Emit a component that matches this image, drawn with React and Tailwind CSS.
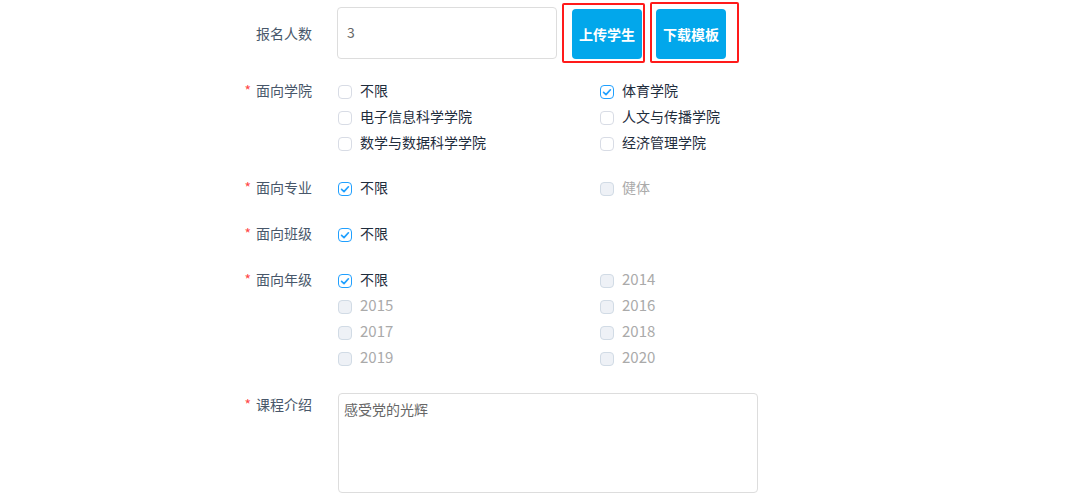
import React from "react";

const FONT = { fontFamily: '"Microsoft YaHei", "Noto Sans CJK SC", "Noto Sans", sans-serif' };

function Box({ state }) {
  if (state === "checked") {
    return (
      <span className="mt-[4px] flex h-[14px] w-[14px] shrink-0 items-center justify-center rounded-[4px] border border-[#20a0ff] bg-white">
        <svg width="10" height="10" viewBox="0 0 10 10">
          <path d="M1.6 5.4 L4 7.6 L8.4 2.8" fill="none" stroke="#20a0ff" strokeWidth="1.7" strokeLinecap="round" strokeLinejoin="round" />
        </svg>
      </span>
    );
  }
  if (state === "disabled") {
    return <span className="mt-[4px] h-[14px] w-[14px] shrink-0 rounded-[4px] border border-[#d1dbe5] bg-[#eef1f6]" />;
  }
  return <span className="mt-[4px] h-[14px] w-[14px] shrink-0 rounded-[4px] border border-[#d8dce5] bg-white" />;
}

function Opt({ label, state }) {
  const digits = /^\d+$/.test(label);
  return (
    <div className="flex h-[26px] items-center">
      <Box state={state} />
      <span className={"ml-2 " + (digits ? "text-[15px] " : "text-[14px] ") + (state === "disabled" ? "text-[#aaaaaa]" : "text-[#1f2d3d]")}>{label}</span>
    </div>
  );
}

function Label({ text, required, lh = "leading-[26px]" }) {
  return (
    <div className={"w-[100px] shrink-0 text-right text-[14px] text-[#48576a] " + lh}>
      {required && <span className="mr-[5px] text-[#ff4949]">*</span>}
      {text}
    </div>
  );
}

function Group({ items }) {
  return (
    <div className="ml-[26px] grid grid-cols-[262px_auto]">
      {items.map(([l, s], i) => (
        <Opt key={i} label={l} state={s} />
      ))}
    </div>
  );
}

export default function App() {
  return (
    <div className="min-h-[500px] bg-white pl-[212px] pt-[6px]" style={FONT}>
      <div className="flex items-center">
        <Label text="报名人数" />
        <div className="ml-[25px] flex h-[52px] w-[220px] items-center rounded-[4px] border border-[#dddddd] pl-[9px] text-[14px] text-[#666666]">3</div>
        <div className="relative ml-[15px] mt-[3px]">
          <button className="h-[50px] w-[70px] rounded-[4px] bg-[#02a7eb] text-[14px] font-bold text-white">上传学生</button>
          <div className="pointer-events-none absolute left-[-10px] top-[-6px] h-[60px] w-[83px] rounded-[2px] border-2 border-[#ff1a1a]" />
        </div>
        <div className="relative ml-[14px] mt-[3px]">
          <button className="h-[50px] w-[70px] rounded-[4px] bg-[#02a7eb] text-[14px] font-bold text-white">下载模板</button>
          <div className="pointer-events-none absolute left-[-6px] top-[-7px] h-[61px] w-[89px] rounded-[2px] border-2 border-[#ff1a1a]" />
        </div>
      </div>

      <div className="mt-[18px] flex items-start">
        <Label text="面向学院" required />
        <Group
          items={[
            ["不限", "off"],
            ["体育学院", "checked"],
            ["电子信息科学学院", "off"],
            ["人文与传播学院", "off"],
            ["数学与数据科学学院", "off"],
            ["经济管理学院", "off"],
          ]}
        />
      </div>

      <div className="mt-[19px] flex items-start">
        <Label text="面向专业" required />
        <Group
          items={[
            ["不限", "checked"],
            ["健体", "disabled"],
          ]}
        />
      </div>

      <div className="mt-[20px] flex items-start">
        <Label text="面向班级" required />
        <Group items={[["不限", "checked"]]} />
      </div>

      <div className="mt-[20px] flex items-start">
        <Label text="面向年级" required />
        <Group
          items={[
            ["不限", "checked"],
            ["2014", "disabled"],
            ["2015", "disabled"],
            ["2016", "disabled"],
            ["2017", "disabled"],
            ["2018", "disabled"],
            ["2019", "disabled"],
            ["2020", "disabled"],
          ]}
        />
      </div>

      <div className="mt-[23px] flex items-start">
        <Label text="课程介绍" required lh="leading-[22px]" />
        <div className="ml-[26px] h-[100px] w-[420px] rounded-[4px] border border-[#dddddd] px-[5px] pt-[5px] text-[14px] leading-[20px] text-[#666666]">
          感受党的光辉
        </div>
      </div>
    </div>
  );
}
